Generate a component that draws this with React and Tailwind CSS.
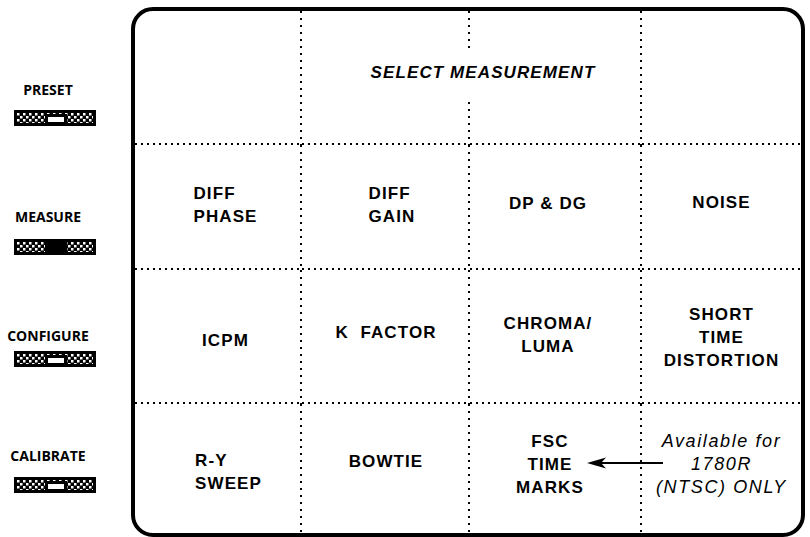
import React from 'react';

// dotted cell edges: right + bottom, right only, bottom only, none
const RB =
  'bg-[repeating-linear-gradient(to_bottom,#000_0_2px,transparent_2px_7px),repeating-linear-gradient(to_right,#000_0_2px,transparent_2px_6px)] bg-[length:2px_100%,100%_2px] bg-[position:right_top,left_bottom] bg-no-repeat';
const R =
  'bg-[repeating-linear-gradient(to_bottom,#000_0_2px,transparent_2px_7px)] bg-[length:2px_100%] bg-[position:right_top] bg-no-repeat';
const B =
  'bg-[repeating-linear-gradient(to_right,#000_0_2px,transparent_2px_6px)] bg-[length:100%_2px] bg-[position:left_bottom] bg-no-repeat';

const buttons = [
  { label: 'PRESET', active: false, top: 'mt-[83px]', gap: 'mt-[13px]' },
  { label: 'MEASURE', active: true, top: 'mt-[84px]', gap: 'mt-[15px]' },
  { label: 'CONFIGURE', active: false, top: 'mt-[74px]', gap: 'mt-[8px]' },
  { label: 'CALIBRATE', active: false, top: 'mt-[82px]', gap: 'mt-[14px]' },
];

const cells = [
  [
    { lines: ['DIFF', 'PHASE'], left: true, cls: 'pl-[14px] pb-[6px]' },
    { lines: ['DIFF', 'GAIN'], left: true, cls: 'pl-[12px] pb-[6px]' },
    { lines: ['DP & DG'], cls: 'pr-[16px] pb-[8px]' },
    { lines: ['NOISE'], cls: 'pb-[10px]' },
  ],
  [
    { lines: ['ICPM'], cls: 'pl-[14px] pt-[6px]' },
    { lines: ['K\u00a0\u00a0FACTOR'], cls: 'pb-[10px]' },
    { lines: ['CHROMA/', 'LUMA'], cls: 'pr-[16px] pb-[4px]' },
    { lines: ['SHORT', 'TIME', 'DISTORTION'], cls: '' },
  ],
  [
    { lines: ['R-Y', 'SWEEP'], left: true, cls: 'pl-[20px] pt-[6px]' },
    { lines: ['BOWTIE'], cls: 'pb-[14px]' },
    { lines: ['FSC', 'TIME', 'MARKS'], cls: 'pr-[12px] pb-[8px]' },
    { lines: ['Available for', '1780R', '(NTSC) ONLY'], italic: true, cls: 'pb-[8px]' },
  ],
];

function PanelButton({ active }) {
  return (
    <svg width="82" height="16" viewBox="0 0 82 16">
      <defs>
        <pattern id="halftone" width="6" height="6" patternUnits="userSpaceOnUse">
          <rect width="6" height="6" fill="#000" />
          <rect x="0" y="0" width="2.5" height="2.5" fill="#fff" />
          <rect x="3" y="3" width="2.5" height="2.5" fill="#fff" />
        </pattern>
      </defs>
      <rect x="0" y="0" width="82" height="16" fill="#000" />
      <rect x="3" y="3" width="76" height="10" fill="url(#halftone)" />
      {active ? (
        <rect x="31" y="2" width="22" height="12" fill="#000" />
      ) : (
        <>
          <rect x="31" y="4" width="22" height="12" fill="#000" />
          <rect x="34" y="7" width="16" height="5" fill="#fff" />
        </>
      )}
    </svg>
  );
}

export default function App() {
  return (
    <div className="flex w-[810px] h-[537px] bg-white overflow-hidden font-['Liberation_Sans',Arial,sans-serif] text-black">
      <div className="w-[131px] shrink-0 flex flex-col">
        {buttons.map((b) => (
          <div key={b.label} className={`flex flex-col items-center w-[108px] ${b.top}`}>
            <div className="pr-[12px] font-['Open_Sans',sans-serif] font-bold text-[14px] leading-[14px]">
              {b.label}
            </div>
            <div className={`${b.gap} ml-[2px] flex`}>
              <PanelButton active={b.active} />
            </div>
          </div>
        ))}
      </div>

      <div className="mt-[7px] w-[674px] h-[530px] shrink-0 border-4 border-black rounded-[22px] overflow-hidden">
        <div className="relative grid h-full grid-cols-[167px_168px_172px_1fr] grid-rows-[134px_125px_134px_1fr]">
          <div className={`row-start-1 col-start-1 ${RB}`} />
          <div className={`row-start-1 col-start-2 ${RB}`} />
          <div className={`row-start-1 col-start-3 ${RB}`} />
          <div className={`row-start-1 col-start-4 ${B}`} />
          <div className="row-start-1 col-start-1 col-end-5 place-self-center ml-[30px] mb-[10px] bg-white py-[15px] italic font-bold text-[17px] leading-[18px] tracking-[1.1px]">
            SELECT MEASUREMENT
          </div>

          {cells.map((row, ri) =>
            row.map((c, ci) => {
              const last = ri === cells.length - 1;
              const edge = ci === 3 ? (last ? '' : B) : last ? R : RB;
              return (
                <div key={`${ri}-${ci}`} className={`${edge} flex items-center justify-center ${c.cls}`}>
                  <div
                    className={
                      c.italic
                        ? 'text-center italic text-[18px] leading-[23px] tracking-[1.6px]'
                        : c.left
                        ? 'text-left font-bold text-[17px] leading-[23px] tracking-[1.1px]'
                        : 'text-center font-bold text-[17px] leading-[23px] tracking-[1.1px]'
                    }
                  >
                    {c.lines.map((l) => (
                      <div key={l}>{l}</div>
                    ))}
                  </div>
                </div>
              );
            })
          )}

          <svg className="absolute left-[452px] top-[446px]" width="76" height="12" viewBox="0 0 76 12">
            <line x1="14" y1="6" x2="76" y2="6" stroke="#000" strokeWidth="2" />
            <polygon points="0,6 19,0.5 14,6 19,11.5" fill="#000" />
          </svg>
        </div>
      </div>
    </div>
  );
}
